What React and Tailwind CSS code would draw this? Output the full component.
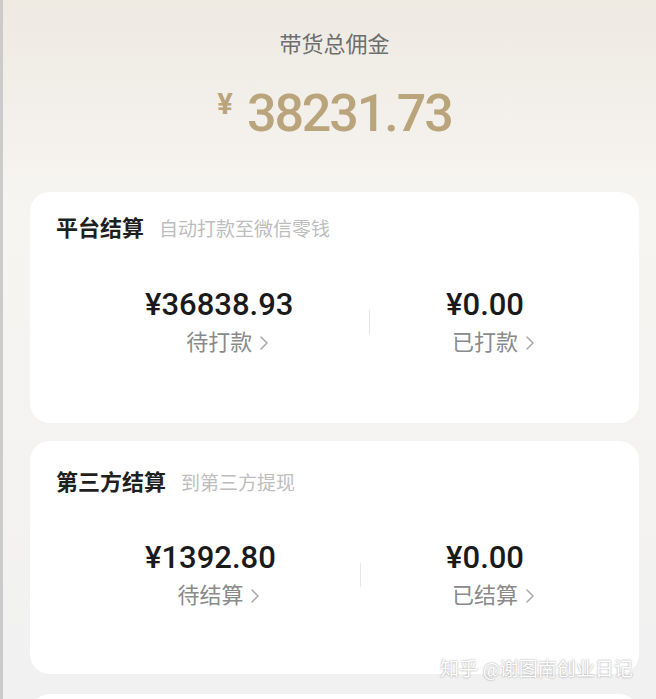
import React from "react";

const Chevron = () => (
  <svg width="10" height="16" viewBox="0 0 10 16" className="absolute left-full top-1/2 ml-[7px] -translate-y-1/2">
    <path d="M2 2 L8 8 L2 14" fill="none" stroke="#a8a8a8" strokeWidth="1.5" strokeLinecap="round" strokeLinejoin="round" />
  </svg>
);

const Stat = ({ value, label }) => (
  <div className="flex flex-col items-center">
    <div className="text-[31px] leading-[36px] font-medium text-[#1a1a1a]">{value}</div>
    <div className="relative mt-[6px] text-[22px] leading-[28px] text-[#8a8a8a]">
      {label}
      <Chevron />
    </div>
  </div>
);

const Card = ({ title, sub, left, right, cls, rowCls }) => (
  <div className={"rounded-[20px] bg-white px-[26px] " + cls}>
    <div className="flex items-baseline">
      <span className="text-[22px] leading-[28px] font-bold text-[#1f1f1f]">{title}</span>
      <span className="ml-[15px] text-[19px] leading-[28px] text-[#bdbdbd]">{sub}</span>
    </div>
    <div className={"mx-[89px] flex items-center justify-between " + rowCls}>
      <Stat value={left[0]} label={left[1]} />
      <div className="h-6 w-px bg-[#e6e6e6]" />
      <Stat value={right[0]} label={right[1]} />
    </div>
  </div>
);

export default function App() {
  return (
    <div
      className="relative flex h-[699px] w-[656px] overflow-hidden bg-gradient-to-b from-[#eeeae2] via-[#f7f5f2] via-30% to-[#f1f1f1]"
      style={{ fontFamily: 'Roboto, "Noto Sans CJK SC", sans-serif' }}
    >
      <div className="w-[3px] shrink-0 bg-[#cbcbcb]" />
      <div className="flex flex-1 flex-col pl-[27px] pr-[17px]">
        <div className="pt-[30px] text-center text-[22px] leading-[30px] text-[#6e6e6e]">带货总佣金</div>
        <div className="mt-[28px] flex justify-center text-[#baa47c]">
          <span className="mr-[14px] mt-[2px] text-[29px] leading-[29px] font-bold">¥</span>
          <span className="text-[52px] leading-[52px] font-medium tracking-[-0.04em]">38231.73</span>
        </div>
        <div className="mt-[52px]">
          <Card
            title="平台结算"
            sub="自动打款至微信零钱"
            left={["¥36838.93", "待打款"]}
            right={["¥0.00", "已打款"]}
            cls="pt-[23px] pb-[66px]"
            rowCls="mt-[43px]"
          />
        </div>
        <div className="mt-[18px]">
          <Card
            title="第三方结算"
            sub="到第三方提现"
            left={["¥1392.80", "待结算"]}
            right={["¥0.00", "已结算"]}
            cls="pt-[28px] pb-[64px]"
            rowCls="mt-[42px]"
          />
        </div>
        <div className="mt-[20px] h-[60px] shrink-0 rounded-[20px] bg-white" />
      </div>
      <div className="absolute left-[440px] top-[657px] text-[19px] leading-[26px] text-white [text-shadow:0_0_2px_rgba(0,0,0,0.45)]">
        知乎 @谢图南创业日记
      </div>
    </div>
  );
}
